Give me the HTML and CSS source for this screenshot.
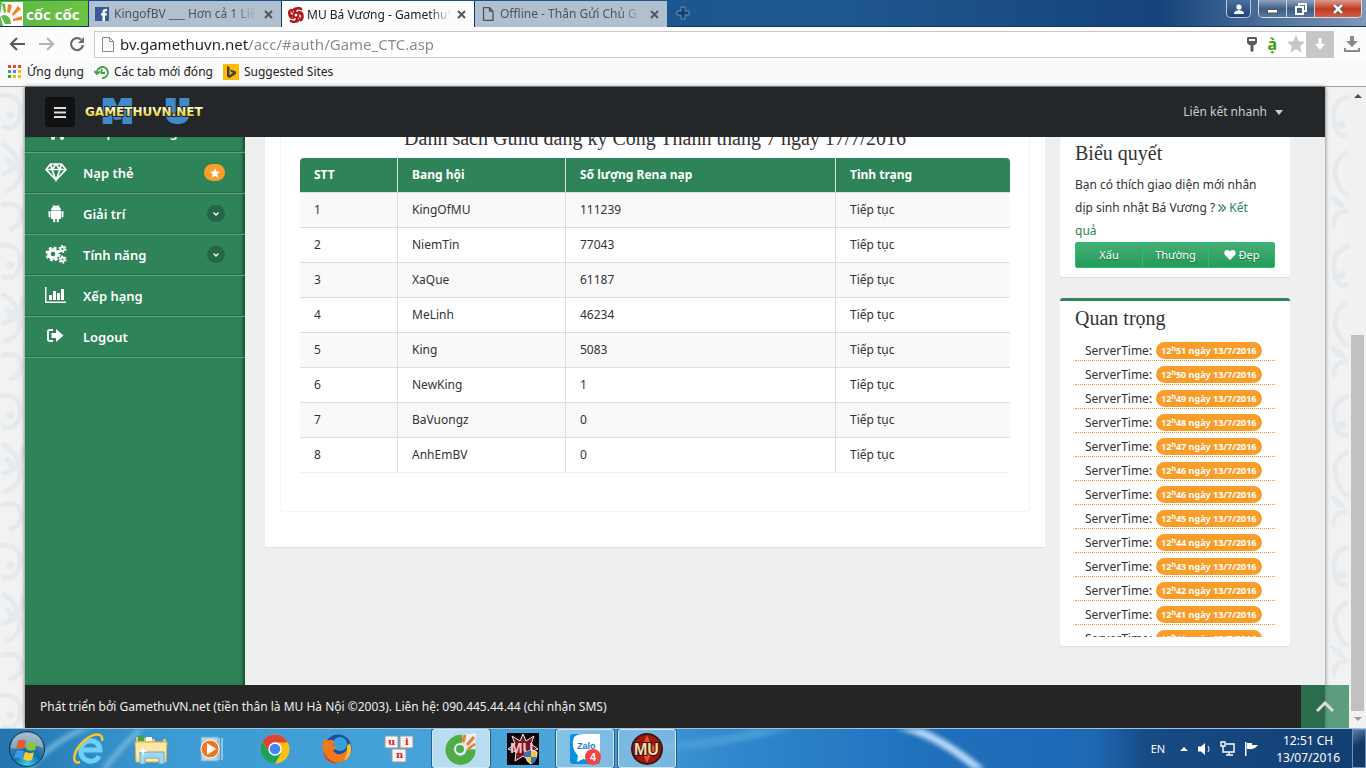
FILE: index.html
```html
<!DOCTYPE html>
<html lang="vi">
<head>
<meta charset="utf-8">
<title>MU Bá Vương - GamethuVN</title>
<link rel="stylesheet" href="styles.css">
</head>
<body>
<div class="tabstrip">
  <button class="brand" type="button">
    <svg width="24" height="24" viewBox="0 0 24 24"><path fill="#fff" d="M2 0h21v24H3L0 13z"/><path fill="#f58220" d="M7 10 8 2l4 1-2 8zM12 12l6-8 3 3-8 7zM13 17l9-3v4l-9 1z"/><path fill="#5fb946" d="M1 14c5-3 10 1 10 8H5zM2 1l3 1 1 8-2 1z"/></svg>
    <span>cốc cốc</span>
  </button>
  <div class="tab">
    <svg width="14" height="14" viewBox="0 0 14 14"><rect width="14" height="14" fill="#3b5998"/><path fill="#fff" d="M7.500 14V8.500H6V6.300h1.500V4.800C7.500 3 8.500 2 10.200 2H12v2.300h-1.200c-.6 0-.8.3-.8.8v1.200h2l-.3 2.200H10V14z"/></svg>
    <span class="tab-title">KingofBV ___ Hơn cả 1 Liên</span>
    <button class="x" type="button" aria-label="Đóng"><svg width="9" height="9" viewBox="0 0 9 9"><path d="M1 1l7 7M8 1 1 8"/></svg></button>
  </div>
  <div class="tab active">
    <svg width="16" height="16" viewBox="0 0 16 16" fill="none" stroke="#b5161c"><circle cx="8" cy="8" r="2.500" stroke-width="2"/><path stroke-width="2.600" stroke-linecap="round" d="M5 9C1 9 0 5 3 3M7 5c-1-3 3-5 6-3M11 6c3 0 5 4 2 7M9 11c1 3-3 5-6 3"/><path stroke-width="1.500" d="M4 6Q4 2 8 1M10 5q4-1 5 3M12 10q0 4-4 5M6 11q-4 1-5-3"/></svg>
    <span class="tab-title">MU Bá Vương - GamethuV</span>
    <button class="x" type="button" aria-label="Đóng"><svg width="9" height="9" viewBox="0 0 9 9"><path d="M1 1l7 7M8 1 1 8"/></svg></button>
  </div>
  <div class="tab">
    <svg width="14" height="14" viewBox="0 0 14 14" fill="none" stroke="#4a5560" stroke-width="1.300"><path d="M2.500.7h6L12 4.200v9.100H2.500zM8.500.7v3.500H12"/></svg>
    <span class="tab-title">Offline - Thân Gửi Chủ G B</span>
    <button class="x" type="button" aria-label="Đóng"><svg width="9" height="9" viewBox="0 0 9 9"><path d="M1 1l7 7M8 1 1 8"/></svg></button>
  </div>
  <button class="newtab" type="button" aria-label="Thẻ mới"><svg width="14" height="14" viewBox="0 0 14 14"><path d="M5 1h4v4h4v4H9v4H5V9H1V5h4z" fill="#14406f" stroke="#6a90b5"/></svg></button>
  <div class="winctl">
    <button class="user" type="button" aria-label="Người dùng"><svg width="10" height="10" viewBox="0 0 10 10" fill="#fff"><circle cx="5" cy="3" r="2.600"/><path d="M0 10c0-5 10-5 10 0z"/></svg></button>
    <div class="wingroup">
      <button type="button" aria-label="Thu nhỏ"><svg width="11" height="10" viewBox="0 0 11 10"><rect x=".5" y="5.500" width="10" height="3.500" fill="#fff" stroke="#555"/></svg></button>
      <button type="button" aria-label="Phục hồi"><svg width="12" height="12" viewBox="0 0 12 12" fill="none" stroke="#fff" stroke-width="2"><path d="M4 3V1h7v7H9"/><rect x="1" y="4" width="7" height="7"/></svg></button>
      <button class="close" type="button" aria-label="Đóng cửa sổ"><svg width="12" height="10" viewBox="0 0 12 10"><path d="M2 1l8 8M10 1 2 9" stroke="#444" stroke-width="4"/><path d="M2 1l8 8M10 1 2 9" stroke="#fff" stroke-width="2.500"/></svg></button>
    </div>
  </div>
</div>

<div class="toolbar">
  <button type="button" aria-label="Lùi"><svg width="16" height="14" viewBox="0 0 16 14" fill="none" stroke="#5a5a5a" stroke-width="2.200"><path d="M8 1 2 7l6 6M2 7h14"/></svg></button>
  <button type="button" aria-label="Tiến"><svg width="16" height="14" viewBox="0 0 16 14" fill="none" stroke="#b5b5b5" stroke-width="2.200"><path d="M8 1l6 6-6 6M14 7H0"/></svg></button>
  <button type="button" aria-label="Tải lại"><svg width="16" height="16" viewBox="0 0 16 16"><path d="M12 3.500A6 6 0 1 0 14 9" fill="none" stroke="#6a6a6a" stroke-width="2.200"/><path d="M15 1v6H9z" fill="#6a6a6a"/></svg></button>
  <div class="omnibox">
    <svg width="12" height="15" viewBox="0 0 12 15" fill="#fafafa" stroke="#8a8a8a"><path d="M.5.5h7l4 4v10H.5zM7.500.5v4h4"/></svg>
    <input class="url" type="text" aria-label="Địa chỉ" value="bv.gamethuvn.net/acc/#auth/Game_CTC.asp">
    <svg width="10" height="15" viewBox="0 0 10 15"><path fill-rule="evenodd" d="M1 0h8l1 1v5L8 8H2L0 6V1zM2 2v2h6V2zM3.500 8h3v6l-1.500 1-1.500-1z" fill="#5a5a5a"/></svg>
    <b class="ext">ạ̀</b>
    <svg width="18" height="18" viewBox="0 0 18 18"><path fill="#c6c6c6" d="m9 0 2.600 6.200 6.400.5-4.900 4.300L14.700 18 9 14l-5.700 4 1.600-7L0 6.700l6.400-.5z"/></svg>
    <button class="save" type="button" aria-label="Lưu"><svg width="10" height="12" viewBox="0 0 10 12"><path d="M3.500 0h3v6H10l-5 6-5-6h3.500z" fill="#fff"/></svg></button>
  </div>
  <button type="button" aria-label="Tải xuống"><svg width="16" height="16" viewBox="0 0 16 16" fill="#8a8a8a"><path d="M6 0h4v5h4l-6 6-6-6h4zM0 12h2v2h12v-2h2v4H0z"/></svg></button>
</div>

<nav class="bookmarks">
  <a href="#"><svg width="14" height="13" viewBox="0 0 14 13"><path fill="#ea4335" d="M0 0h3v3H0zM5 0h3v3H5zM10 0h3v3h-3z"/><path fill="#34a853" d="M0 5h3v3H0zM0 10h3v3H0z"/><path fill="#4285f4" d="M5 5h3v3H5z"/><path fill="#fbbc05" d="M10 5h3v3h-3zM5 10h3v3H5zM10 10h3v3h-3z"/></svg>Ứng dụng</a>
  <a href="#"><svg width="15" height="14" viewBox="0 0 15 14" fill="none" stroke="#3fa046" stroke-width="1.800"><path d="M3 8a5.500 5.500 0 1 1 5 5M7.500 4v4h3.500M0 6l3 3 3-2.500"/></svg>Các tab mới đóng</a>
  <a href="#"><svg width="16" height="16" viewBox="0 0 16 16"><rect width="16" height="16" fill="#ffb900"/><path fill="#444" d="m4 2 2.500 1v8L10 9 8 8 7 5.500l6 2V10l-6.500 4L4 12.500z"/></svg>Suggested Sites</a>
</nav>

<div class="viewport">
  <div class="page">
    <svg class="damask" width="100%" height="100%" aria-hidden="true">
      <defs><pattern id="swirl" width="50" height="150" patternUnits="userSpaceOnUse"><g fill="none" stroke="#e4eaee" stroke-width="5" stroke-linecap="round"><path d="M2 8q20 0 18 18T4 40M48 10q-16 4-14 22t12 16M4 58q14 8 16 24T6 104M22 62q2 18-18 24M46 66q-14 8-10 24t12 18M3 118q16-4 18 8t-10 16M46 124q-14 2-12 14"/></g><g fill="#e4eaee"><path d="M4 70q10 0 18 14-14 2-18-14zM30 108q12 2 16 14-14-2-16-14z"/><circle cx="10" cy="28" r="4"/><circle cx="42" cy="38" r="4"/></g></pattern></defs>
      <rect width="100%" height="100%" fill="url(#swirl)"/>
    </svg>
    <div class="site">
      <header class="navbar">
        <button class="menu" type="button" aria-label="Menu"><svg width="13" height="11" viewBox="0 0 13 11"><path d="M0 1h12M0 5.500h12M0 10h12" stroke="#ddd" stroke-width="2"/></svg></button>
        <a class="logo" href="#" aria-label="MU Gamethuvn.net"><svg width="122" height="28" viewBox="0 0 122 28">
          <defs><linearGradient id="gold" x1="0" y1="0" x2="0" y2="1"><stop offset="0.300" stop-color="#fff9c0"/><stop offset="0.800" stop-color="#e8c91c"/></linearGradient></defs>
          <g class="logo-mu"><text x="17" y="24">M</text><text x="80" y="24">U</text></g>
          <text class="logo-name" x="0" y="18" fill="url(#gold)">GAMETHUVN.NET</text></svg></a>
        <button class="quick" type="button">Liên kết nhanh <svg width="8" height="5" viewBox="0 0 8 5"><path d="M0 0h8L4 5z" fill="#ccc"/></svg></button>
      </header>

      <div class="body">
        <nav class="sidebar">
          <ul>
            <li><a href="#"><svg width="22" height="20" viewBox="0 0 22 20" fill="#fff"><path d="M1 0h4l1 2h14l-2 8H7l1 2h10v2H6L3 2H1z"/><circle cx="8" cy="16" r="2"/><circle cx="17" cy="16" r="2"/></svg><span>Shop bán hàng</span></a></li>
            <li><a href="#"><svg width="22" height="20" viewBox="0 0 22 20" fill="none" stroke="#fff" stroke-width="1.700"><path d="M5.500 1h11L21 6.500 11 17 1 6.500zM1 6.500h20M5.500 1 7 6.500 11 17l4-10.500L16.500 1M7 6.500 11 1l4 5.500"/></svg><span>Nạp thẻ</span><i class="star"><svg width="10" height="10" viewBox="0 0 18 18"><path fill="#fff" d="m9 0 2.600 6.200 6.400.5-4.900 4.300L14.700 18 9 14l-5.700 4 1.600-7L0 6.700l6.400-.5z"/></svg></i></a></li>
            <li><a href="#"><svg width="22" height="20" viewBox="0 0 22 20" fill="#fff"><path d="M6 6.500a5 5 0 0 1 10 0zM6 7h10v8H6z"/><path d="M8 1 9 3M14 1 13 3" stroke="#fff"/><path d="M4.500 8v4.500M17.500 8v4.500M9.200 14v3.500M12.800 14v3.500" stroke="#fff" stroke-width="2" stroke-linecap="round"/></svg><span>Giải trí</span><i class="chev"><svg width="6" height="4" viewBox="0 0 6 4"><path d="M.5.5 3 3 5.500.5" fill="none" stroke="#fff" stroke-width="1.300"/></svg></i></a></li>
            <li><a href="#"><svg width="22" height="20" viewBox="0 0 22 20" fill="none" stroke="#fff"><circle cx="8" cy="9" r="4" stroke-width="3.500"/><circle cx="8" cy="9" r="6.400" stroke-width="2.200" stroke-dasharray="2.800 2.226"/><circle cx="17.500" cy="4" r="2" stroke-width="1.800"/><circle cx="17.500" cy="4" r="3.300" stroke-width="1.600" stroke-dasharray="1.700 1.755"/><circle cx="17.500" cy="14.500" r="2" stroke-width="1.800"/><circle cx="17.500" cy="14.500" r="3.300" stroke-width="1.600" stroke-dasharray="1.700 1.755"/></svg><span>Tính năng</span><i class="chev"><svg width="6" height="4" viewBox="0 0 6 4"><path d="M.5.5 3 3 5.500.5" fill="none" stroke="#fff" stroke-width="1.300"/></svg></i></a></li>
            <li><a href="#"><svg width="22" height="20" viewBox="0 0 22 20" fill="#fff"><path d="M0 1h1.500v14.500H21V17H0zM4 9h3v5H4zM8 5h3v9H8zM12 7h3v7h-3zM16 3h3v11h-3z"/></svg><span>Xếp hạng</span></a></li>
            <li><a href="#"><svg width="22" height="20" viewBox="0 0 22 20" fill="#fff"><path d="M8 3H5Q3 3 3 5v7q0 2 2 2h3" fill="none" stroke="#fff" stroke-width="2"/><path d="M6.500 6H11V2l7.500 6.500L11 15v-4H6.500z"/></svg><span>Logout</span></a></li>
          </ul>
        </nav>

        <main class="panel">
          <section class="inner">
            <h2>Danh sách Guild đăng ký Công Thành tháng 7 ngày 17/7/2016</h2>
            <table>
              <thead><tr><th class="c1">STT</th><th class="c2">Bang hội</th><th class="c3">Số lượng Rena nạp</th><th>Tình trạng</th></tr></thead>
              <tbody>
                <tr><td>1</td><td>KingOfMU</td><td>111239</td><td>Tiếp tục</td></tr>
                <tr><td>2</td><td>NiemTin</td><td>77043</td><td>Tiếp tục</td></tr>
                <tr><td>3</td><td>XaQue</td><td>61187</td><td>Tiếp tục</td></tr>
                <tr><td>4</td><td>MeLinh</td><td>46234</td><td>Tiếp tục</td></tr>
                <tr><td>5</td><td>King</td><td>5083</td><td>Tiếp tục</td></tr>
                <tr><td>6</td><td>NewKing</td><td>1</td><td>Tiếp tục</td></tr>
                <tr><td>7</td><td>BaVuongz</td><td>0</td><td>Tiếp tục</td></tr>
                <tr><td>8</td><td>AnhEmBV</td><td>0</td><td>Tiếp tục</td></tr>
              </tbody>
            </table>
          </section>
        </main>

        <aside class="side">
          <section class="card vote">
            <h3>Biểu quyết</h3>
            <p>Bạn có thích giao diện mới nhân dịp sinh nhật Bá Vương ? <a href="#"><svg width="8" height="8" viewBox="0 0 8 8" fill="none" stroke="#2e8359" stroke-width="1.300"><path d="M.5.5 4 4 .5 7.500M4 .5 7.500 4 4 7.500"/></svg> Kết quả</a></p>
            <div class="btns"><button type="button">Xấu</button><button type="button">Thường</button><button type="button"><svg width="12" height="10" viewBox="0 0 12 10"><path fill="#fff" d="M6 10 1 5C-1.500 1.500 3-2 6 1.500 9-2 13.500 1.500 11 5z"/></svg> Đẹp</button></div>
          </section>
          <section class="card important">
            <h3>Quan trọng</h3>
            <ul class="times">
              <li>ServerTime: <b>12<sup>h</sup>51 ngày 13/7/2016</b></li>
              <li>ServerTime: <b>12<sup>h</sup>50 ngày 13/7/2016</b></li>
              <li>ServerTime: <b>12<sup>h</sup>49 ngày 13/7/2016</b></li>
              <li>ServerTime: <b>12<sup>h</sup>48 ngày 13/7/2016</b></li>
              <li>ServerTime: <b>12<sup>h</sup>47 ngày 13/7/2016</b></li>
              <li>ServerTime: <b>12<sup>h</sup>46 ngày 13/7/2016</b></li>
              <li>ServerTime: <b>12<sup>h</sup>46 ngày 13/7/2016</b></li>
              <li>ServerTime: <b>12<sup>h</sup>45 ngày 13/7/2016</b></li>
              <li>ServerTime: <b>12<sup>h</sup>44 ngày 13/7/2016</b></li>
              <li>ServerTime: <b>12<sup>h</sup>43 ngày 13/7/2016</b></li>
              <li>ServerTime: <b>12<sup>h</sup>42 ngày 13/7/2016</b></li>
              <li>ServerTime: <b>12<sup>h</sup>41 ngày 13/7/2016</b></li>
              <li>ServerTime: <b>12<sup>h</sup>41 ngày 13/7/2016</b></li>
            </ul>
          </section>
        </aside>
      </div>
      <footer class="footer">Phát triển bởi GamethuVN.net (tiền thân là MU Hà Nội ©2003). Liên hệ: 090.445.44.44 (chỉ nhận SMS)</footer>
    </div>
    <button class="gotop" type="button" aria-label="Lên đầu trang"><svg width="20" height="12" viewBox="0 0 20 12"><path d="m2 10 8-8 8 8" fill="none" stroke="#ddd" stroke-width="3"/></svg></button>
  </div>
  <div class="scrollbar">
    <svg width="8" height="4" viewBox="0 0 8 4"><path d="M0 4h8L4 0z" fill="#505050"/></svg>
    <div class="track"><div class="thumb"></div></div>
    <svg width="8" height="4" viewBox="0 0 8 4"><path d="M0 0h8L4 4z" fill="#999"/></svg>
  </div>
</div>

<div class="taskbar">
  <svg class="streak" width="100%" height="40" viewBox="0 0 1366 40" preserveAspectRatio="none" aria-hidden="true"><path d="M896-4q42 8 90 50" fill="none" stroke="#b5d6f5" stroke-width="8"/><path d="M20 50Q60 0 110-6M100 46q20-28 45-50" fill="none" stroke="#6fb6dd" stroke-width="5"/><path d="M640 20q80-4 150-24" fill="none" stroke="#489bd6" stroke-width="9"/></svg>
  <button class="start" type="button" aria-label="Start"><svg width="38" height="38" viewBox="0 0 38 38"><defs><radialGradient id="orb" cx=".5" cy=".95" r=".9"><stop offset="0" stop-color="#39d3f5"/><stop offset=".45" stop-color="#146aa5"/><stop offset="1" stop-color="#7a9ab0"/></radialGradient></defs><circle cx="19" cy="19" r="17.500" fill="url(#orb)" stroke="#14334f"/><path d="M3 18Q4 3 19 3t16 15q-8-4-16-1T3 18z" fill="#fff" opacity=".35"/><path fill="#ee5a26" d="m10 11c3-2 6-1 8 0l-2 8c-3-2-6-1-8 0z"/><path fill="#8cc63f" d="M20 12c3 1 6 1 9-1l-2 9c-3 1-6 1-9-1z"/><path fill="#3a9be8" d="M8 21c3-1 5-1 8 0l-2 8c-3-1-5-2-8 0z"/><path fill="#fdca2e" d="M17 22c3 1 6 2 9 0l-2 8c-3 1-6 1-9-1z"/></svg></button>
  <button class="app" type="button" aria-label="Internet Explorer"><svg width="32" height="32" viewBox="0 0 32 32" fill="none"><path d="M8 17h19C27 5 8 4 8 18c0 12 15 13 18 5" stroke="#2b93cf" stroke-width="7"/><path d="M8 17h19C27 5 8 4 8 18c0 12 15 13 18 5" stroke="#6fd0f5" stroke-width="5"/><path d="M29 8C31-2 18 0 9 10-1 20-1 32 7 29" stroke="#f6c727" stroke-width="2.500"/></svg></button>
  <button class="app" type="button" aria-label="Explorer"><svg width="34" height="30" viewBox="0 0 34 30"><path d="M2 3h8l2 2h20v22H2z" fill="#e6c46a"/><path d="M4 2h6v5H4z" fill="#48a14c"/><path d="M12 3h6v4h-6z" fill="#fff"/><path d="M21 5h8v3h-8z" fill="#4b8fd5"/><path d="M1 8h32l-1 20H2z" fill="#fbe7a3" stroke="#d5b052"/><path d="M6 30V18h24v12h-5v-6H11v6z" fill="#a3d6ef" stroke="#6aa9ca"/><path d="m9 12 1 4 4 1-4 1-1 5-1-5-4-1 4-1z" fill="#fff"/></svg></button>
  <button class="app" type="button" aria-label="Media Player"><svg width="30" height="28" viewBox="0 0 30 28"><path d="M3 2h17v24H3z" fill="#b5d7ed" stroke="#7ba5c4"/><path d="M21 3v22M24 3v22" stroke="#9cc3de" stroke-width="2"/><circle cx="12" cy="14" r="9" fill="#f0761d" stroke="#fff"/><path d="M9 8v12l9-6z" fill="#fff"/></svg></button>
  <button class="app" type="button" aria-label="Chrome"><svg width="30" height="30" viewBox="0 0 30 30"><circle cx="15" cy="15" r="14.500" fill="#fbc116"/><path d="M2.500 7.500A14.500 14.500 0 0 1 28 8.500H15L9 18z" fill="#db4437"/><path d="M2.500 7.500A14.500 14.500 0 0 0 15 29.500L21 19l-12-1z" fill="#1da160"/><circle cx="15" cy="15" r="6.700" fill="#fff"/><circle cx="15" cy="15" r="5.300" fill="#4285f4"/></svg></button>
  <button class="app" type="button" aria-label="Firefox"><svg width="30" height="30" viewBox="0 0 30 30"><circle cx="16" cy="14" r="13.500" fill="#1b4f9c"/><circle cx="18" cy="10" r="7" fill="#32a3dc"/><path d="M2 5q3 2 6 1 3-1 5 2-3 1-2 4 2 0 4 1-1 3-4 3 2 5 8 4 8-2 6-11 7 11-3 18-11 5-18-4Q-2 14 2 5z" fill="#ee7a1e"/><path d="M28 9q4 12-6 18 4-9 3-15z" fill="#fdbd2f"/><path d="M1 16q4 12 16 13Q6 31 2 21z" fill="#d7411f"/></svg></button>
  <button class="app" type="button" aria-label="UniKey"><svg width="32" height="28" viewBox="0 0 32 28"><g fill="#f4f4f4" stroke="#999"><rect x="2" y="1" width="13" height="12" rx="1"/><rect x="17" y="1" width="13" height="12" rx="1"/><rect x="9" y="14" width="14" height="13" rx="1"/></g><g class="keys"><text x="5" y="10">u</text><text x="22" y="10">i</text><text x="13" y="23">n</text></g></svg></button>
  <button class="app open current" type="button" aria-label="Cốc Cốc"><svg width="32" height="32" viewBox="0 0 32 32" fill="none"><path d="M17 6.500a10.500 10.500 0 1 0 9 10" stroke="#50ad46" stroke-width="9"/><path d="M17 2l14-2-1 16-9-1z" fill="#e4f1fa"/><circle cx="15" cy="16" r="5" fill="#4cad45" stroke="#e4f1fa" stroke-width="2"/><path d="m18 9 2-7M22 12l7-8" stroke="#f47a25" stroke-width="3"/><path d="m23 16 7-5" stroke="#f47a25" stroke-width="2.500"/></svg></button>
  <button class="app" type="button" aria-label="MU Launcher"><svg width="32" height="32" viewBox="0 0 32 32"><rect width="32" height="32" fill="#0a0507"/><path d="m16 1 3 7 8-5-3 8 7 5-8 3 1 9-8-5-8 5 1-9-8-3 7-5-3-8 8 5z" fill="#7b1420" stroke="#eee"/><text class="mu-dark" x="3" y="20">MU</text><path d="m24 17 6 2q0 9-6 12-6-3-6-12z" fill="#eecb2a" stroke="#eee"/><path d="M24 17v7h-6v-5zM24 24h6q-1 5-6 7z" fill="#3174c8"/></svg></button>
  <button class="app open" type="button" aria-label="Zalo"><svg width="32" height="32" viewBox="0 0 32 32"><rect x="1" y="1" width="30" height="30" rx="3" fill="#0a90dc"/><path d="M5 4q3-3 10-3h16v23q-8 5-17 2l-6 3 1-6Q1 14 5 4z" fill="#fff"/><text class="zalo" x="8" y="16">Zalo</text><circle cx="24" cy="24" r="8" fill="#f7423e"/><text class="count" x="21" y="28">4</text></svg></button>
  <button class="app open" type="button" aria-label="MU"><svg width="32" height="32" viewBox="0 0 32 32"><circle cx="16" cy="16" r="15" fill="#a3150f" stroke="#3b1714" stroke-width="2"/><path d="m16 2 4 9 8 5-8 5-4 9-4-9-8-5 8-5z" fill="#e3532c"/><text class="mu-red" x="3" y="22">MU</text></svg></button>
  <div class="tray">
    <span class="lang">EN</span>
    <svg width="8" height="4" viewBox="0 0 8 4"><path d="M0 4h8L4 0z" fill="#fff"/></svg>
    <svg width="14" height="14" viewBox="0 0 14 14"><path d="M1 4.500h3L8 1v12L4 9.500H1z" fill="#fff"/><path d="M11 4q2 3 0 6" fill="none" stroke="#ccd" stroke-width="1.200"/></svg>
    <svg width="15" height="15" viewBox="0 0 15 15" fill="none" stroke="#fff" stroke-width="1.400"><path d="M6 3h8v8H3V7M1 1h4v4H1zM3 5v3M6 14h7M9 11v3"/></svg>
    <svg width="15" height="14" viewBox="0 0 15 14"><path d="M1 0h1.500v14H1z" fill="#fff"/><path d="M3 1h5v2h6l-3 3-3 1H3z" fill="#fff"/></svg>
    <div class="clock"><span>12:51 CH</span><span>13/07/2016</span></div>
  </div>
  <button class="desk" type="button" aria-label="Show desktop"></button>
</div>
</body>
</html>
```
FILE: styles.css
```css
* { box-sizing: border-box; }
html, body { height: 100%; }
body {
  margin: 0;
  display: flex;
  flex-direction: column;
  overflow: hidden;
  font: 12px/16px "Noto Sans", "Open Sans", sans-serif;
  color: #333;
}
button { font: inherit; color: inherit; padding: 0; border: 0; background: none; }
svg { flex: none; display: block; }
a { color: inherit; text-decoration: none; }
ul { list-style: none; margin: 0; padding: 0; }

/* browser window */
.tabstrip {
  flex: none;
  height: 27px;
  display: flex;
  background: linear-gradient(90deg, #174a87, #1f5891 60%, #16437b 85%, #8098b8);
  border-bottom: 1px solid #14386a;
}
.brand {
  width: 88px;
  display: flex;
  align-items: center;
  gap: 2px;
  background: linear-gradient(90deg, #5bb947, #6cc242);
  border-top: 1px solid #2e8a3b;
  color: #fff;
  font: 700 15px/24px "Noto Sans", sans-serif;
}
.tab {
  width: 193px;
  height: 26px;
  margin-top: 1px;
  padding: 0 6px;
  display: flex;
  align-items: center;
  gap: 5px;
  background: #b0c0ce;
  border-left: 1px solid #14386a;
  color: #4a5560;
}
.tab.active { height: 27px; gap: 3px; background: #fcfcfc; color: #222; }
.tab-title {
  flex: 1;
  overflow: hidden;
  white-space: nowrap;
  -webkit-mask-image: linear-gradient(90deg, #000 85%, transparent);
  mask-image: linear-gradient(90deg, #000 85%, transparent);
}
.x { width: 14px; display: flex; justify-content: center; }
.x path { stroke: #555; stroke-width: 2; }
.newtab { width: 32px; display: flex; justify-content: center; align-items: center; }
.winctl { margin-left: auto; display: flex; gap: 7px; padding-right: 4px; height: 18px; }
.winctl button {
  width: 28px;
  height: 18px;
  display: flex;
  justify-content: center;
  align-items: center;
  border-right: 1px solid #c8d4e0;
  background: linear-gradient(#8fa5bf, #3d5c84 50%, #5c7ba0);
}
.winctl .user { width: 25px; border: 1px solid #b9c8d8; border-top: 0; border-radius: 0 0 5px 5px; background: linear-gradient(#4d6e99, #1c4478); }
.wingroup { display: flex; border: 1px solid #d5dee8; border-top: 0; border-radius: 0 0 5px 5px; overflow: hidden; }
.winctl .close { width: 46px; border: 0; background: linear-gradient(#dd9a8c, #c03a22 50%, #d4644a); }

.toolbar { flex: none; height: 34px; display: flex; align-items: center; background: #fcfcfc; padding: 0 6px 0 9px; gap: 14px; }
.omnibox {
  flex: 1;
  height: 27px;
  margin: 0 -4px 0 -5px;
  padding-left: 7px;
  display: flex;
  align-items: center;
  gap: 10px;
  background: #fff;
  border: 1px solid #c8c8c8;
}
.url {
  flex: 1;
  min-width: 0;
  margin-left: -4px;
  padding: 0;
  border: 0;
  outline: 0;
  font: 15px/24px "Noto Sans", sans-serif;
  color: transparent;
  background: linear-gradient(90deg, #222 129px, #888 129px);
  -webkit-background-clip: text;
  background-clip: text;
}
.ext { color: #3c9d0e; font: 700 16px/20px "Noto Sans", sans-serif; }
.save { width: 27px; height: 25px; margin-left: -9px; display: flex; align-items: center; justify-content: center; background: #c6c6c6; }
.bookmarks {
  flex: none;
  height: 26px;
  display: flex;
  align-items: center;
  gap: 10px;
  padding: 0 8px 4px;
  background: #fafafa;
  border-bottom: 1px solid #a0a0a0;
  color: #222;
}
.bookmarks a { display: flex; align-items: center; gap: 5px; }

/* web page */
.viewport { flex: 1; min-height: 0; display: flex; }
.page { position: relative; flex: 1; display: flex; background: #f2f2f2; }
.damask { position: absolute; inset: 0; }
.site {
  position: relative;
  flex: 1;
  margin: 0 24px 0 25px;
  display: flex;
  flex-direction: column;
  background: #efefef;
  box-shadow: 0 0 4px rgba(0, 0, 0, .6);
}
.navbar {
  position: relative;
  z-index: 2;
  flex: none;
  height: 50px;
  display: flex;
  align-items: center;
  gap: 10px;
  padding: 0 42px 0 20px;
  background: #24272a;
}
.menu { width: 30px; height: 30px; display: flex; align-items: center; justify-content: center; background: #101113; border-radius: 3px; }
.logo-mu { font: 700 31px "DejaVu Sans", sans-serif; fill: #418aca; stroke: #418aca; stroke-width: 4px; }
.logo-name { font: 700 12px "DejaVu Sans", sans-serif; stroke: #24272a; stroke-width: 2px; paint-order: stroke; }
.quick { margin-left: auto; display: flex; align-items: center; gap: 8px; color: #ccc; }

.body { flex: 1; min-height: 0; display: flex; align-items: flex-start; gap: 15px; padding-right: 35px; overflow: hidden; }
.sidebar { flex: none; width: 220px; align-self: stretch; margin-right: 5px; background: #2e8359; box-shadow: inset -3px 0 3px -1px #164a30; }
.sidebar ul { margin-top: -26px; border-bottom: 1px solid #5fa481; }
.sidebar li { height: 41px; border-top: 1px solid #5fa481; border-bottom: 1px solid #266c4a; }
.sidebar a { height: 100%; display: flex; align-items: center; gap: 16px; padding: 0 20px; color: #fff; font: 600 13px/20px "Noto Sans", sans-serif; }
.sidebar i { margin-left: auto; display: flex; align-items: center; justify-content: center; height: 17px; border-radius: 9px; }
.star { width: 21px; background: #f99d2b; }
.chev { width: 18px; background: #246746; }

.panel { flex: 1; min-width: 0; padding: 0 15px 35px; background: #fff; border-bottom: 1px solid #e2e2e2; }
.inner { padding: 0 19px 38px; border: 1px solid #f5f5f5; border-top: 0; border-radius: 0 0 4px 4px; }
.inner h2 { margin: -11px 0 8px; text-align: center; font: 400 20px/24px "Liberation Serif", serif; }
h3 { margin: 0; font: 400 20px/24px "Liberation Serif", serif; }
table { width: 100%; table-layout: fixed; border-collapse: separate; border-spacing: 0; border-bottom: 1px solid #f2f2f2; }
th, td { height: 35px; padding: 0 14px; text-align: left; border-left: 1px solid #ddd; }
th:first-child, td:first-child { border-left: 0; }
th { height: 34px; background: #2e8359; color: #fff; font-weight: 700; }
th:first-child { border-top-left-radius: 4px; }
th:last-child { border-top-right-radius: 4px; }
.c1 { width: 97px; }
.c2 { width: 168px; }
.c3 { width: 270px; }
td { border-top: 1px solid #ddd; }
tbody tr:nth-child(odd) td { background: #f9f9f9; }

.side { flex: none; width: 230px; display: grid; gap: 21px; }
.card { background: #fff; border-radius: 3px; padding: 0 15px 9px; box-shadow: 0 1px 1px #ddd; }
.vote { padding-top: 4px; }
.vote p { margin: 8px 0 0; padding-right: 8px; line-height: 23px; }
.vote p a { color: #2e8359; }
.vote p svg { display: inline-block; }
.btns { display: grid; grid-template-columns: repeat(3, 1fr); border: 1px solid #20c470; border-radius: 2px; }
.btns button { height: 24px; display: flex; align-items: center; justify-content: center; gap: 3px; color: #fff; font-size: 11px; text-shadow: 0 1px 1px #186b40; background: linear-gradient(#46ae76, #249a58); }
.btns button + button { border-left: 1px solid #20c470; }
.important { border-top: 3px solid #2e8359; padding-top: 5px; }
.times { height: 300px; margin-top: 7px; overflow: hidden; }
.times li { height: 24px; padding: 4px 0 0 10px; display: flex; align-items: center; gap: 4px; border-bottom: 1px dotted #f0922b; white-space: nowrap; }
.times b { padding: 0 5px; border-radius: 9px; background: #f99d2b; color: #fff; font: 700 9px/17px "Noto Sans", sans-serif; }
.times sup { font-size: 7px; line-height: 0; vertical-align: 3px; }

.footer { flex: none; height: 43px; padding: 0 15px; background: #252525; color: #eee; line-height: 43px; }
.gotop { position: absolute; right: 0; bottom: 0; width: 48px; height: 43px; display: flex; align-items: center; justify-content: center; background: rgba(46, 131, 89, .76); }
.scrollbar { flex: none; width: 17px; display: flex; flex-direction: column; align-items: center; background: #f1f1f1; padding: 7px 0; gap: 6px; }
.track { flex: 1; width: 13px; display: flex; flex-direction: column; justify-content: flex-end; }
.thumb { height: 62%; background: #c1c1c1; }

/* desktop taskbar */
.taskbar {
  position: relative;
  flex: none;
  height: 40px;
  display: flex;
  overflow: hidden;
  border-top: 1px solid #9cc3e0;
  background: linear-gradient(90deg, #2474ae, #3c9bd3 12%, #4aa5da 40%, #2e86cb 55%, #2070bc 68%, #1e68b4 80%, #174b85 84%, #123f72);
  color: #fff;
}
.streak { position: absolute; inset: 0; filter: blur(2px); }
.taskbar button, .tray { position: relative; }
.start { width: 54px; margin-right: 6px; display: flex; justify-content: center; align-items: center; }
.app { width: 58px; margin-right: 4px; display: flex; justify-content: center; align-items: center; }
.open { border: 1px solid #cfe6f5; border-radius: 3px; background: rgba(255, 255, 255, .32); box-shadow: 0 0 0 1px #2a5f88; }
.current { background: rgba(255, 255, 255, .62); }
.keys { font: 700 10px "DejaVu Serif", serif; fill: #e02020; }
.mu-dark { font: 700 15px "Liberation Sans", sans-serif; fill: #f3c4c4; }
.mu-red { font: 700 16px "Liberation Sans", sans-serif; fill: #f7d9a5; stroke: #35110c; stroke-width: 2px; paint-order: stroke; }
.zalo { font: 700 9px "Liberation Sans", sans-serif; fill: #1580cf; }
.count { font: 700 11px "Liberation Sans", sans-serif; fill: #fff; }
.tray { margin-left: auto; display: flex; align-items: center; gap: 9px; padding-right: 12px; }
.lang { font-size: 11px; padding-right: 6px; }
.clock { margin-left: 8px; display: grid; text-align: center; line-height: 17px; }
.desk { width: 14px; border: 1px solid #6f93b8; background: linear-gradient(150deg, #5d7fa5, #123a68 40%); }
```
